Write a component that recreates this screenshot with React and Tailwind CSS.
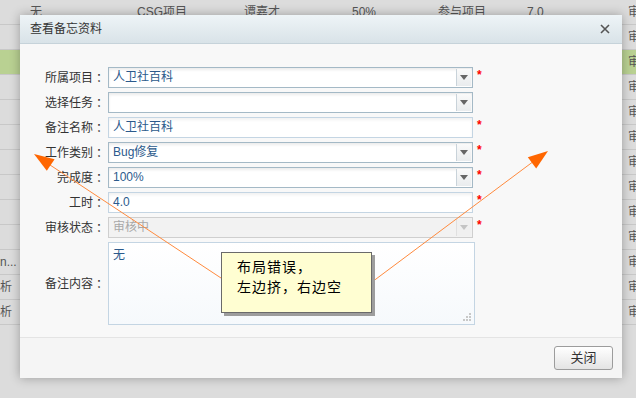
import React from "react";

const FONT = {
  fontFamily: '"Liberation Sans", "Noto Sans CJK SC", sans-serif',
};

const rows = [
  ["", "无", "CSG项目", "谭嘉才", "50%", "参与项目", "7.0", "审核中"],
  ["", "", "", "", "", "", "", "审核中"],
  ["", "", "", "", "", "", "", "审核中"],
  ["", "", "", "", "", "", "", "审核中"],
  ["", "", "", "", "", "", "", "审核中"],
  ["", "", "", "", "", "", "", "审核中"],
  ["", "", "", "", "", "", "", "审核中"],
  ["", "", "", "", "", "", "", "审核中"],
  ["", "", "", "", "", "", "", "审核中"],
  ["", "", "", "", "", "", "", "审核中"],
  ["n...", "", "", "", "", "", "", "审核中"],
  ["析", "", "", "", "", "", "", "审核中"],
  ["析", "", "", "", "", "", "", "审核中"],
];

function Label({ text }) {
  return (
    <div className="w-[85px] flex justify-end text-[12px] text-[#333]">
      <span>{text}</span>
      <span className="w-[12px] text-center" style={{ fontFamily: '"Noto Sans CJK TC", sans-serif' }}>
        ：
      </span>
    </div>
  );
}

function Star({ show = true }) {
  return (
    <span className="ml-[4px] w-[8px] self-start mt-[1px] text-[12px] font-bold leading-[14px] text-[#ff0000]">
      {show ? "*" : ""}
    </span>
  );
}

function Arrow({ disabled }) {
  return (
    <div
      className={`m-[1px] w-[15px] flex items-center justify-center border-l ${
        disabled
          ? "border-[#e0e0e0] bg-[#f0f0f0]"
          : "border-[#c9d3da] bg-gradient-to-b from-[#fafafa] to-[#e9ecee]"
      }`}
    >
      <svg width="8" height="5" viewBox="0 0 8 5">
        <path d="M0 0 H8 L4 5 Z" fill={disabled ? "#c4c4c4" : "#666666"} />
      </svg>
    </div>
  );
}

function Field({ label, value, select, disabled, required = true }) {
  return (
    <div className="flex items-center h-[21px] mb-[4px]">
      <Label text={label} />
      <div
        className={`ml-[3px] w-[365px] h-[21px] flex border ${
          disabled
            ? "border-[#cfcfcf] bg-[#f2f2f2]"
            : select
            ? "border-[#a4b9c6] bg-white shadow-[inset_0_2px_3px_rgba(0,0,0,0.08)]"
            : "border-[#c4d5e3] bg-white shadow-[inset_0_2px_3px_rgba(0,0,0,0.06)]"
        }`}
      >
        <div
          className={`flex-1 pl-[4px] text-[12px] leading-[19px] ${
            disabled ? "text-[#a8a8a8]" : "text-[#2c5a8c]"
          }`}
        >
          {value}
        </div>
        {select && <Arrow disabled={disabled} />}
      </div>
      <Star show={required} />
    </div>
  );
}

export default function App() {
  return (
    <div
      className="relative w-[636px] h-[398px] overflow-hidden bg-[#dcdcdc]"
      style={FONT}
    >
      {/* background table under the mask */}
      <div>
        {rows.map((r, i) => (
          <div
            key={i}
            className={`h-[25px] grid grid-cols-[30px_107px_107px_108px_86px_89px_101px_1fr] items-center border-b border-[#c8c8c8] text-[12px] text-[#555] whitespace-nowrap ${
              i === 2 ? "bg-[#b9d192]" : ""
            }`}
          >
            {r.map((c, j) => (
              <div key={j} className="overflow-hidden">
                {c}
              </div>
            ))}
          </div>
        ))}
      </div>

      {/* dialog */}
      <div className="absolute left-[20px] top-[15px] w-[602px] bg-[#f8f8f8] shadow-[0_0_10px_rgba(0,0,0,0.3)]">
        <div className="h-[29px] flex items-center justify-between pl-[10px] pr-[12px] bg-gradient-to-b from-[#eef4f7] to-[#d9e3e8] border-b border-[#c6d3da]">
          <span className="text-[12px] text-[#333]">查看备忘资料</span>
          <svg width="10" height="10" viewBox="0 0 10 10">
            <path d="M1 1 L9 9 M9 1 L1 9" stroke="#555" strokeWidth="1.6" />
          </svg>
        </div>

        <div className="pt-[23px] pb-[12px]">
          <Field label="所属项目" value="人卫社百科" select />
          <Field label="选择任务" value="" select required={false} />
          <Field label="备注名称" value="人卫社百科" />
          <Field label="工作类别" value="Bug修复" select />
          <Field label="完成度" value="100%" select />
          <Field label="工时" value="4.0" />
          <Field label="审核状态" value="审核中" select disabled />
          <div className="flex items-center">
            <Label text="备注内容" />
            <div className="relative ml-[3px] w-[367px] h-[83px] border border-[#c4d5e3] bg-gradient-to-b from-white to-[#f6f9fc] pl-[4px] pt-[3px] text-[12px] text-[#2c5a8c]">
              无
              <svg className="absolute right-[2px] bottom-[2px]" width="9" height="9" viewBox="0 0 9 9">
                <rect x="6" y="0" width="2" height="2" fill="#c8c8c8" />
                <rect x="3" y="3" width="2" height="2" fill="#c8c8c8" />
                <rect x="6" y="3" width="2" height="2" fill="#c8c8c8" />
                <rect x="0" y="6" width="2" height="2" fill="#c8c8c8" />
                <rect x="3" y="6" width="2" height="2" fill="#c8c8c8" />
                <rect x="6" y="6" width="2" height="2" fill="#c8c8c8" />
              </svg>
            </div>
          </div>
        </div>

        <div className="h-[41px] border-t border-[#e4e4e4] bg-[#f5f5f5] flex justify-end pt-[8px] pr-[9px]">
          <button className="w-[59px] h-[24px] rounded-[3px] border border-[#9c9c9c] bg-gradient-to-b from-white to-[#e4e4e4] text-[13px] text-[#333]">
            关闭
          </button>
        </div>
      </div>

      {/* annotation arrows */}
      <svg className="absolute inset-0 pointer-events-none" width="636" height="398">
        <line x1="221" y1="278" x2="44" y2="161" stroke="#ff8a3d" strokeWidth="1" />
        <polygon points="34,154 54.6,159.2 46.8,170.8" fill="#ff6600" />
        <line x1="372" y1="282" x2="538" y2="158" stroke="#ff8a3d" strokeWidth="1" />
        <polygon points="548,151 536.2,168.5 527.8,157.3" fill="#ff6600" />
      </svg>

      {/* annotation callout */}
      <div className="absolute left-[221px] top-[252px] w-[151px] h-[61px] border border-[#6a6a6a] bg-[#fffed2] shadow-[3px_3px_0_#9d9d9d] pl-[15px] pt-[4px] text-[14px] leading-[20px] tracking-[1px] text-black">
        <div>布局错误，</div>
        <div>左边挤，右边空</div>
      </div>
    </div>
  );
}
